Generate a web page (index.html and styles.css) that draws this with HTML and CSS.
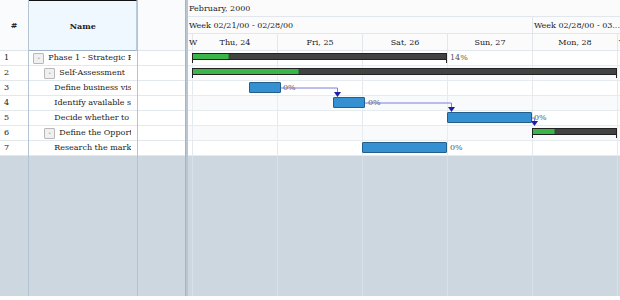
FILE: index.html
```html
<!DOCTYPE html>
<html>
	<head>
		<meta charset="UTF-8">
		<title>Gantt</title>
		<link rel="stylesheet" href="styles.css">
	</head>
	<body>
		<div class="gantt">
			<div class="grid">
				<div class="col col-num">
					<div class="hcell">#</div>
					<div class="cell">1</div>
					<div class="cell">2</div>
					<div class="cell">3</div>
					<div class="cell">4</div>
					<div class="cell">5</div>
					<div class="cell">6</div>
					<div class="cell">7</div>
				</div>
				<div class="col col-name">
					<div class="hcell active">Name</div>
					<div class="cell lvl0"><span class="toggle">-</span><span class="txt">Phase 1 - Strategic Planning</span></div>
					<div class="cell lvl1"><span class="toggle">-</span><span class="txt">Self-Assessment</span></div>
					<div class="cell lvl2"><span class="txt">Define business vision</span></div>
					<div class="cell lvl2"><span class="txt">Identify available skills</span></div>
					<div class="cell lvl2"><span class="txt">Decide whether to proceed</span></div>
					<div class="cell lvl1"><span class="toggle">-</span><span class="txt">Define the Opportunity</span></div>
					<div class="cell lvl2"><span class="txt">Research the market</span></div>
				</div>
				<div class="col col-extra">
					<div class="hcell"></div>
					<div class="cell"></div>
					<div class="cell"></div>
					<div class="cell"></div>
					<div class="cell"></div>
					<div class="cell"></div>
					<div class="cell"></div>
					<div class="cell"></div>
				</div>
			</div>
			<div class="splitter"></div>
			<div class="timeline">
				<div class="thead">
					<div class="hrow">
						<div class="th month">February, 2000</div>
					</div>
					<div class="hrow">
						<div class="th week first">Week 02/21/00 - 02/28/00</div>
						<div class="th week">Week 02/28/00 - 03...</div>
					</div>
					<div class="hrow days">
						<div class="th day cut">W</div>
						<div class="th day">Thu, 24</div>
						<div class="th day">Fri, 25</div>
						<div class="th day">Sat, 26</div>
						<div class="th day">Sun, 27</div>
						<div class="th day">Mon, 28</div>
						<div class="th day tail">T</div>
					</div>
				</div>
				<div class="tbody">
					<div class="tasks">
						<div class="task">
							<div class="bar summary" style="left:4px;width:255px"><div class="done" style="width:36px"></div></div>
							<span class="pct" style="left:262px">14%</span>
						</div>
						<div class="task alt">
							<div class="bar summary" style="left:4px;width:425px"><div class="done" style="width:106px"></div></div>
						</div>
						<div class="task">
							<div class="bar" style="left:61px;width:32px"></div>
							<span class="pct" style="left:95px">0%</span>
						</div>
						<div class="task alt">
							<div class="bar" style="left:145px;width:32px"></div>
							<span class="pct" style="left:180px">0%</span>
						</div>
						<div class="task">
							<div class="bar" style="left:259px;width:85px"></div>
							<span class="pct" style="left:346px">0%</span>
						</div>
						<div class="task alt">
							<div class="bar summary" style="left:344px;width:85px"><div class="done" style="width:22px"></div></div>
						</div>
						<div class="task">
							<div class="bar" style="left:174px;width:85px"></div>
							<span class="pct" style="left:262px">0%</span>
						</div>
						<svg class="deps" width="432" height="105" viewBox="0 0 432 105">
							<polyline points="93,37 149.5,37 149.5,42" />
							<polygon points="146,41 153,41 149.5,46" />
							<polyline points="177,52 263.5,52 263.5,57" />
							<polygon points="260,56 267,56 263.5,61" />
							<polyline points="344,67 346.5,67 346.5,71" />
							<polygon points="343,70 350,70 346.5,75" />
						</svg>
					</div>
				</div>
			</div>
		</div>
	</body>
</html>
```
FILE: styles.css
```css
body{
	margin:0;
	font-family:"DejaVu Serif", serif;
	font-size:8px;
	color:#222;
}
.gantt{
	display:flex;
	width:620px;
	height:296px;
	background:#cdd7e0;
	overflow:hidden;
}
.grid{
	display:flex;
	width:185px;
}
.col{
	display:flex;
	flex-direction:column;
	border-right:1px solid #b3c4d4;
}
.col-num{ width:29px; }
.col-name{ width:108px; }
.col-extra{ width:48px; border-right:none; }
.hcell{
	height:51px;
	flex:none;
	box-sizing:border-box;
	display:flex;
	align-items:center;
	justify-content:center;
	font-weight:bold;
	background:#fafbfc;
	border-bottom:1px solid #dfe5eb;
}
.hcell.active{
	background:#eef8fe;
	border-top:1px solid #111;
	border-bottom:1px solid #9fb3c6;
	border-right:1px solid #b9cad9;
}
.cell{
	height:15px;
	flex:none;
	box-sizing:border-box;
	border-bottom:1px solid #e3e8ed;
	background:#fff;
	line-height:14px;
	padding-left:4px;
	padding-right:6px;
	white-space:nowrap;
	overflow:hidden;
	display:flex;
	align-items:center;
}
.txt{
	min-width:0;
	overflow:hidden;
	white-space:nowrap;
}
.col-name .cell.lvl0{ padding-left:4px; }
.col-name .cell.lvl1{ padding-left:15px; }
.col-name .cell.lvl2{ padding-left:25px; }
.toggle{
	display:inline-flex;
	align-items:center;
	justify-content:center;
	flex:none;
	width:9px;
	height:9px;
	margin-right:4px;
	border:1px solid #b8b8b8;
	border-radius:1px;
	background:#f0f0f0;
	color:#666;
	font-size:7px;
	line-height:9px;
}
.splitter{
	width:3px;
	flex:none;
	background:#b9c6d2;
	border-left:1px solid #a6b5c4;
	box-sizing:border-box;
}
.timeline{
	flex:1;
	display:flex;
	flex-direction:column;
	overflow:hidden;
}
.thead{ background:#fbfbfc; }
.hrow{
	display:flex;
	height:17px;
	box-sizing:border-box;
	border-bottom:1px solid #e1e7ed;
	white-space:nowrap;
}
.th{
	box-sizing:border-box;
	line-height:17px;
	flex:none;
	overflow:hidden;
}
.month{ padding-left:1px; }
.week{
	padding-left:1px;
	border-right:1px solid #e1e7ed;
}
.week.first{ width:345px; }
.week:last-child{ width:87px; border-right:none; }
.day{
	width:85px;
	text-align:center;
	border-right:1px solid #e1e7ed;
}
.day.cut{
	width:5px;
	overflow:visible;
	text-align:left;
	padding-left:1px;
}
.day.tail{
	width:20px;
	text-align:left;
	padding-left:1px;
	border-right:none;
}
.tbody{
	flex:1;
	background-color:#cdd7e0;
	background-image:repeating-linear-gradient(90deg, #d9e1e8 0 1px, transparent 1px 85px);
	background-position:4px 0;
}
.tasks{
	position:relative;
	background-color:#fff;
	background-image:repeating-linear-gradient(90deg, #e4e9ee 0 1px, transparent 1px 85px);
	background-position:4px 0;
}
.task{
	position:relative;
	height:15px;
	box-sizing:border-box;
	border-bottom:1px solid #e6ebf0;
}
.task.alt{ background:rgba(240,242,244,0.4); }
.bar{
	position:absolute;
	top:1px;
	height:11px;
	box-sizing:border-box;
	background:#3590d2;
	border:1px solid #235f8c;
	border-radius:1px;
}
.bar.summary{
	top:2px;
	height:7px;
	background:#424242;
	border:1px solid #222;
	border-radius:0;
}
.bar.summary:before,
.bar.summary:after{
	content:"";
	position:absolute;
	bottom:-4px;
	width:1px;
	height:4px;
	background:#222;
}
.bar.summary:before{ left:-1px; }
.bar.summary:after{ right:-1px; }
.done{
	height:100%;
	background:#3bb54a;
	border-right:1px solid #2a8a35;
	box-sizing:border-box;
}
.pct{
	position:absolute;
	top:0;
	line-height:14px;
	color:#555;
}
.deps{
	position:absolute;
	left:0;
	top:0;
}
.deps polyline{
	fill:none;
	stroke:#7c7cdc;
	stroke-width:1;
}
.deps polygon{
	fill:#1e1ea8;
}
```
